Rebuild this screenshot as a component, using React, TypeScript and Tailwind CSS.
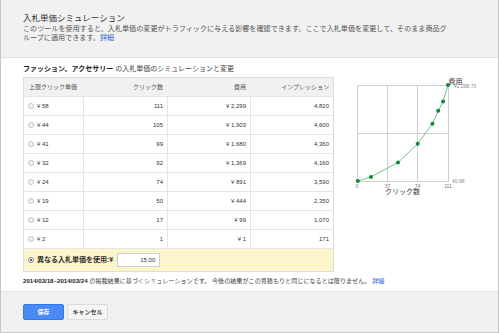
import React from "react";

const font = { fontFamily: '"Liberation Sans", "Noto Sans CJK JP", sans-serif' };

const rows = [
  ["¥ 58", "111", "¥ 2,299", "4,820"],
  ["¥ 44", "105", "¥ 1,903", "4,600"],
  ["¥ 41", "99", "¥ 1,680", "4,360"],
  ["¥ 32", "92", "¥ 1,369", "4,160"],
  ["¥ 24", "74", "¥ 891", "3,590"],
  ["¥ 19", "50", "¥ 444", "2,350"],
  ["¥ 12", "17", "¥ 99", "1,070"],
  ["¥ 2", "1", "¥ 1", "171"],
];

const points = [
  [1, 1],
  [17, 99],
  [50, 444],
  [74, 891],
  [92, 1369],
  [99, 1680],
  [105, 1903],
  [111, 2299],
];

function Radio({ on }: { on?: boolean }) {
  return (
    <span
      className={`inline-flex h-[6px] w-[6px] shrink-0 items-center justify-center rounded-full border ${
        on ? "border-[#888] bg-white" : "border-[#c4c4c4] bg-[#f3f3f3]"
      }`}
    >
      {on ? <span className="h-[2px] w-[2px] rounded-full bg-[#333]" /> : null}
    </span>
  );
}

function Chart() {
  const px = (c: number) => 356 + (c / 111) * 91;
  const py = (v: number) => 181 - ((v - 0.98) / (2298.7 - 0.98)) * 96;
  const line = points.map(([c, v]) => `${px(c).toFixed(1)},${py(v).toFixed(1)}`).join(" ");
  return (
    <svg width="160" height="125" viewBox="340 77 160 125" className="shrink-0" style={font}>
      <rect x="356.5" y="85.5" width="91" height="96" fill="white" stroke="#cfcfcf" />
      <line x1="386.5" y1="85" x2="386.5" y2="181" stroke="#cfcfcf" />
      <line x1="416.5" y1="85" x2="416.5" y2="181" stroke="#cfcfcf" />
      <line x1="356" y1="133.5" x2="447" y2="133.5" stroke="#cfcfcf" />
      <polyline points={line} fill="none" stroke="#5cbf7a" strokeWidth="0.9" />
      {points.map(([c, v]) => (
        <circle key={c} cx={px(c)} cy={py(v)} r="2" fill="#0b8a3a" />
      ))}
      <text x="356" y="187.5" fontSize="5" fill="#777" textAnchor="middle">0</text>
      <text x="386.5" y="187.5" fontSize="5" fill="#777" textAnchor="middle">37</text>
      <text x="416.5" y="187.5" fontSize="5" fill="#777" textAnchor="middle">74</text>
      <text x="447" y="187.5" fontSize="5" fill="#777" textAnchor="middle">111</text>
      <text x="401.5" y="194" fontSize="7" fill="#333" textAnchor="middle">クリック数</text>
      <text x="447.5" y="83.5" fontSize="7" fill="#333">費用</text>
      <text x="453" y="88" fontSize="5" fill="#888">¥2,298.70</text>
      <text x="451" y="182.5" fontSize="5" fill="#888">¥0.98</text>
    </svg>
  );
}

export default function App() {
  return (
    <div className="h-[333px] w-[500px] bg-white" style={font}>
      <div className="flex h-[333px] w-[499px] flex-col border border-t-0 border-[#c6c6c6]">
        <div className="h-[58px] shrink-0 border-b border-[#e2e2e2] bg-[#f1f1f1] px-[22px] pt-[12px]">
          <h1 className="text-[8.5px] leading-[12px] text-[#333]">入札単価シミュレーション</h1>
          <p className="mt-[1px] text-[7.1px] leading-[9px] text-[#555]">
            このツールを使用すると、入札単価の変更がトラフィックに与える影響を確認できます。ここで入札単価を変更して、そのまま商品グ
            <br />
            ループに適用できます。<span className="text-[#2a66d6]">詳細</span>
          </p>
        </div>

        <div className="flex-1 px-[22px] pt-[6px]">
          <p className="text-[7px] leading-[10px] text-[#444]">
            <span className="font-bold text-[#222]">ファッション、アクセサリー</span> の入札単価のシミュレーションと変更
          </p>
          <div className="mt-[3px] flex">
            <div className="w-[311px] shrink-0 border border-[#dcdcdc] text-[6px] text-[#333]">
              <div className="grid h-[18px] grid-cols-[59px_84px_83px_83px] items-center bg-[#f1f1f1] text-[#555]">
                <span className="pl-[5px]">上限クリック単価</span>
                <span className="pr-[4px] text-right">クリック数</span>
                <span className="pr-[4px] text-right">費用</span>
                <span className="pr-[4px] text-right">インプレッション</span>
              </div>
              {rows.map((r) => (
                <div
                  key={r[0]}
                  className="grid h-[19px] grid-cols-[59px_84px_83px_83px] border-t border-[#e6e6e6]"
                >
                  <span className="flex items-center gap-[3px] pl-[4px]">
                    <Radio />
                    {r[0]}
                  </span>
                  <span className="flex items-center justify-end border-l border-[#e6e6e6] pr-[4px]">{r[1]}</span>
                  <span className="flex items-center justify-end border-l border-[#e6e6e6] pr-[4px]">{r[2]}</span>
                  <span className="flex items-center justify-end border-l border-[#e6e6e6] pr-[4px]">{r[3]}</span>
                </div>
              ))}
              <div className="flex h-[23px] items-center gap-[3px] border-t border-[#e6e6e6] bg-[#fcf5cb] pl-[4px]">
                <Radio on />
                <span className="text-[7px] font-bold text-[#333]">異なる入札単価を使用:¥</span>
                <span className="ml-[1px] flex h-[14px] w-[43px] items-center justify-end border border-[#cfcfcf] bg-white pr-[4px] text-[6px]">
                  15.00
                </span>
              </div>
            </div>
            <div className="ml-[7px]">
              <Chart />
            </div>
          </div>
          <p className="mt-[4px] text-[6.1px] leading-[10px] text-[#444]">
            <span className="font-bold text-[#222]">2014/03/18~2014/03/24</span> の掲載結果に基づくシミュレーションです。 今後の結果がこの見積もりと同じになるとは限りません。
            <span className="ml-[2px] text-[#2a66d6]">詳細</span>
          </p>
        </div>

        <div className="flex h-[41px] shrink-0 items-start gap-[3px] border-t border-[#e2e2e2] bg-[#f1f1f1] px-[22px] pt-[12px]">
          <button className="flex h-[16px] w-[41px] items-center justify-center rounded-[2px] border border-[#3079ed] bg-[#4a8af4] text-[6px] font-bold text-white">
            保存
          </button>
          <button className="flex h-[16px] w-[41px] items-center justify-center rounded-[2px] border border-[#dcdcdc] bg-[#f5f5f5] text-[6px] font-bold text-[#444]">
            キャンセル
          </button>
        </div>
      </div>
    </div>
  );
}
